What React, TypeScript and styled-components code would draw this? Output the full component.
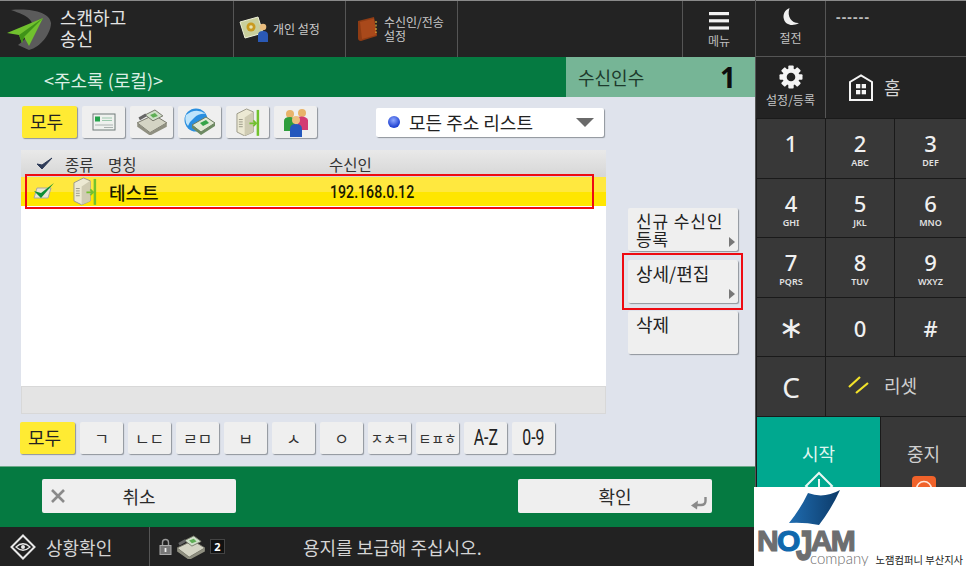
import React from "react";
import styled, { createGlobalStyle } from "styled-components";

const Global = createGlobalStyle`
  html, body { margin: 0; padding: 0; background: #222; }
  * { box-sizing: border-box; }
  body { font-family: "Noto Sans CJK KR", "Noto Sans", sans-serif; }
`;

const Screen = styled.div`
  position: relative; width: 966px; height: 566px; overflow: hidden;
  display: grid; grid-template-columns: 755px 211px; background: #222;
`;
const Left = styled.div`display: flex; flex-direction: column; height: 566px;`;
const Right = styled.div`display: flex; flex-direction: column; height: 566px; background: #1c1c1c; border-left: 1px solid #555;`;

const TopBar = styled.div`
  height: 57px; flex: none; display: flex; background: #232323; border-top: 1px solid #8a8a8a;
`;
const AppCell = styled.div`
  width: 234px; display: flex; align-items: center; padding-left: 5px; gap: 5px; border-right: 1px solid #555;
  color: #e4e4e4; font-size: 18px; line-height: 21px;
`;
const AppName = styled.div`margin-top: -3px;`;
const ShortcutCell = styled.div<{ $pad: number; $gap: number }>`
  width: 112px; display: flex; align-items: center; padding-left: ${p => p.$pad}px; gap: ${p => p.$gap}px; border-right: 1px solid #555;
  color: #c9c9c9; font-size: 12px; line-height: 14px; white-space: nowrap;
`;
const Spacer = styled.div`flex: 1; border-right: 1px solid #555;`;
const MenuCell = styled.div`
  width: 72px; display: flex; flex-direction: column; align-items: center; padding-top: 11px; color: #bdbdbd; font-size: 12px;
`;
const MenuLabel = styled.span`margin-top: 4px; line-height: 14px; white-space: nowrap;`;

const TitleBar = styled.div`height: 40px; flex: none; display: flex; background: #057a41;`;
const Title = styled.div`flex: 1; padding-left: 44px; color: #dcefe4; font-size: 18px; line-height: 47px;`;
const CountPanel = styled.div`
  width: 189px; background: #76b596; display: flex; justify-content: space-between; align-items: center;
  padding: 0 19px 0 12px; color: #1d3a2c; font-size: 18px;
`;
const CountValue = styled.span`
  font-family: "Noto Sans", sans-serif; font-size: 28px; font-weight: 700; color: #0d0d0d; line-height: 40px;
`;

const Content = styled.div`
  flex: 1; background: #dfe3ec; padding: 9px 0 0 21px; position: relative;
  display: grid; grid-template-columns: 585px 1fr; column-gap: 22px; align-content: start;
`;
const ListColumn = styled.div`display: flex; flex-direction: column;`;
const FilterRow = styled.div`display: flex; height: 32px; gap: 5px; align-items: center; padding-left: 1px;`;
const Key = styled.div<{ $active?: boolean; $w?: number }>`
  width: ${p => p.$w ?? 43}px; height: 32px; flex: none; border-radius: 2px;
  display: flex; align-items: center; justify-content: center;
  background: ${p => (p.$active ? "#ffeb33" : "#efefef")};
  box-shadow: 1px 1px 1px #8f949c; color: #1b1b1b;
`;
const ActiveLabel = styled.span`font-size: 18px; color: #222; line-height: 24px; margin: -2px 6px 0 0;`;
const SelectBox = styled.div`
  width: 228px; height: 29px; margin-left: 54px; background: #fff; border-radius: 2px; box-shadow: 1px 1px 1px #8f949c;
  display: flex; align-items: center; padding: 0 10px 0 12px; color: #222; font-size: 18px; gap: 9px;
`;
const Bullet = styled.span`
  width: 12px; height: 12px; border-radius: 50%; flex: none;
  background: radial-gradient(circle at 45% 35%, #8fa8ff, #1c3fd0 70%);
`;
const SelectText = styled.span`flex: 1; white-space: nowrap;`;
const Caret = styled.span`
  width: 0; height: 0; border-left: 9px solid transparent; border-right: 9px solid transparent; border-top: 9px solid #6a6a6a;
`;

const Table = styled.div`margin-top: 12px; width: 585px; height: 264px; display: flex; flex-direction: column; background: #fff;`;
const TableHead = styled.div`
  height: 27px; flex: none; display: flex; align-items: center; background: linear-gradient(#e9e9e9, #d6d6d6);
  color: #333; font-size: 15.5px; padding-left: 15px;
`;
const HeadType = styled.span`margin-left: 12px; width: 43px;`;
const HeadName = styled.span`width: 221px;`;
const Row = styled.div`
  height: 29px; flex: none; display: flex; align-items: center; padding-left: 12px;
  background: linear-gradient(#ffe83f 50%, #ffe600 50%); color: #1b1a00; font-size: 18px;
`;
const RowIcon = styled.span`margin-left: 18px; width: 36px; display: flex;`;
const RowName = styled.span`width: 221px; font-weight: 500;`;
const RowAddress = styled.span`
  display: inline-block; font-family: "Roboto", sans-serif; font-size: 18.5px; font-weight: 500;
  transform: scaleX(.765); transform-origin: left center;
`;
const TableBody = styled.div`flex: 1; background: #fff;`;
const TableFoot = styled.div`height: 28px; flex: none; background: #e4e4e4; border: 1px solid #d8d8d8;`;

const AlphaRow = styled.div`display: flex; gap: 5px; margin-top: 8px; margin-left: -1px; width: 560px;`;
const AlphaKey = styled(Key)<{ $size?: number }>`
  color: #333; font-size: ${p => p.$size ?? 16}px; white-space: nowrap; overflow: hidden; letter-spacing: -.2px;
`;
const AlphaText = styled.span`
  display: inline-block; font-family: "Roboto", sans-serif; font-size: 22px; line-height: 26px; font-weight: 400; color: #222; letter-spacing: 0;
  transform: scaleX(.72);
`;

const SideColumn = styled.div`display: flex; flex-direction: column; gap: 8.5px; padding-top: 102px;`;
const SideButton = styled.div`
  position: relative; width: 110px; height: 43px; background: #efefef; border-radius: 2px; box-shadow: 1px 1px 1px #8f949c;
  color: #222; font-size: 18px; line-height: 17px; padding: 5px 0 0 8px; white-space: nowrap;
`;
const SideLines = styled.span`display: block; font-size: 17px; letter-spacing: .9px; line-height: 18px; margin-top: -1px;`;
const SideArrow = styled.span`
  position: absolute; right: 3px; bottom: 4px; width: 0; height: 0;
  border-top: 5px solid transparent; border-bottom: 5px solid transparent; border-left: 6px solid #777;
`;

const ActionBar = styled.div`
  height: 61px; flex: none; background: #057a41; border-top: 1px solid #6ea98a; display: flex; justify-content: space-between;
  padding: 12px 43px 0 42px;
`;
const ActionButton = styled.div`
  position: relative; width: 194px; height: 34px; background: #efefef; border-radius: 2px; color: #2a2a2a; font-size: 18px;
  display: flex; align-items: center; justify-content: center;
`;
const CancelIcon = styled.span`position: absolute; left: 8px; top: 9px; display: flex;`;
const ReturnIcon = styled.span`position: absolute; right: 4px; bottom: 3px; display: flex;`;

const StatusBar = styled.div`height: 39px; flex: none; background: #222; display: flex; color: #d4d4d4; font-size: 18px;`;
const StatusCell = styled.div`width: 150px; display: flex; align-items: center; gap: 10px; padding-left: 10px; border-right: 1px solid #555; white-space: nowrap;`;
const StatusIcons = styled.div`width: 153px; display: flex; align-items: center; padding-left: 9px; gap: 4px;`;
const CountBadge = styled.span`
  width: 15px; height: 15px; background: #111; border: 1px solid #444; color: #fff; font: 700 11px/13px "Noto Sans", sans-serif; text-align: center;
`;
const StatusText = styled.div`display: flex; align-items: center; white-space: nowrap;`;

const SleepRow = styled.div`height: 57px; flex: none; display: flex; background: #232323; border-top: 1px solid #8a8a8a; border-bottom: 1px solid #555;`;
const IconCell = styled.div`
  width: 70px; flex: none; border-right: 1px solid #555; display: flex; flex-direction: column; align-items: center;
  color: #c5c5c5; font-size: 12px; line-height: 14px; padding-top: 6px;
`;
const SettingsCell = styled(IconCell)`padding-top: 8px;`;
const Dashes = styled.div`padding: 6px 0 0 10px; color: #bcbcbc; font: 700 14px/20px "Noto Sans", sans-serif; letter-spacing: 1.2px;`;
const SettingsRow = styled.div`height: 61px; flex: none; display: flex; background: #232323;`;
const HomeCell = styled.div`flex: 1; display: flex; align-items: center; gap: 11px; padding: 0 0 1px 23px; color: #d4d4d4; font-size: 18px;`;
const Keypad = styled.div`
  display: grid; grid-template-columns: 68px 68px 1fr; grid-auto-rows: 58.5px; gap: 1px; background: #1a1a1a; padding: 1px 0 0 1px; flex: none;
`;
const PadKey = styled.div<{ $low?: boolean }>`
  background: #383838; color: #f0f0f0; display: flex; flex-direction: column; align-items: center;
  padding-top: ${p => (p.$low ? 18 : 12)}px;
  font: 500 22px/24px "Noto Sans", sans-serif;
`;
const StarGlyph = styled.span`font: 400 30px/24px "DejaVu Sans", sans-serif;`;
const ClearKey = styled(PadKey)`font: 400 28px/32px "Noto Sans", sans-serif; padding-top: 14px;`;
const PadSub = styled.span`font: 600 9px/11px "Noto Sans", sans-serif; color: #e2e2e2; margin-top: 2px;`;
const ResetKey = styled.div`
  grid-column: span 2; background: #383838; display: flex; align-items: center; gap: 14px; padding: 0 0 3px 22px; color: #cfcfcf; font-size: 18px;
`;
const BottomKeys = styled.div`flex: 1; display: grid; grid-template-columns: 123px 1fr; gap: 1px; background: #1a1a1a; padding: 1px 0 0 1px;`;
const StartKey = styled.div`
  background: #00a88f; color: #dff5ef; font-size: 18px; line-height: 24px; display: flex; flex-direction: column; align-items: center; padding-top: 24px;
`;
const StopKey = styled.div`
  background: #383838; color: #cfcfcf; font-size: 18px; line-height: 24px; display: flex; flex-direction: column; align-items: center; padding-top: 24px;
`;
const StartMark = styled.span`margin-top: 6px; display: flex;`;
const StopMark = styled.span`margin-top: 11px; display: flex;`;

const Highlight = styled.div<{ $x: number; $y: number; $w: number; $h: number }>`
  position: absolute; left: ${p => p.$x}px; top: ${p => p.$y}px; width: ${p => p.$w}px; height: ${p => p.$h}px;
  border: 2px solid #ee0a12; pointer-events: none;
`;

const LogoBox = styled.div`
  position: absolute; left: 754px; top: 487px; width: 212px; height: 79px; background: #fff;
  padding: 3px 0 0 3px; display: flex; flex-direction: column;
`;
const Sail = styled.svg`margin-left: 31px; flex: none;`;
const Wordmark = styled.div`
  margin-top: 2px; font: 900 30px/24px "Liberation Sans", sans-serif; color: #6d6e70; letter-spacing: -1.8px;
  -webkit-text-stroke: 1.2px #6d6e70; white-space: nowrap;
`;
const BlueLetter = styled.span`color: #0f68ad; -webkit-text-stroke: 1.2px #0f68ad;`;
const TallLetter = styled.span`display: inline-block; margin-left: -2.5px; transform: scaleY(1.42); transform-origin: center top;`;
const LogoFoot = styled.div`display: flex; align-items: baseline; margin: -1px 0 0 53px; white-space: nowrap;`;
const CompanyWord = styled.span`font: 300 15px/13px "Lato", sans-serif; color: #707070;`;
const BranchName = styled.span`margin-left: 7px; font-size: 10.3px; line-height: 13px; color: #222;`;

const Plane = () => (
  <svg width="50" height="44" viewBox="0 0 50 44">
    <path d="M6 3 C28 1 45 6 46 16 C46 26 36 40 24 43 L13 38 C24 30 30 20 26 14 C22 8 14 6 6 3Z" fill="#5b5b5b" />
    <path d="M2 26 L38 11 L24 39 L19 30 L17 36 L14 28Z" fill="#71c12e" />
    <path d="M14 28 L38 11 L19 30 L17 36Z" fill="#3f9318" />
  </svg>
);
const SettingsIcon = () => (
  <svg width="32" height="28" viewBox="0 0 32 28">
    <path d="M1 7 L19 2 L24 18 L6 23Z" fill="#c9cf9c" stroke="#eef0d8" strokeWidth="1" />
    <circle cx="12" cy="12" r="4.5" fill="#c99a1f" /><circle cx="12" cy="12" r="1.8" fill="#e8e2b0" />
    <circle cx="24" cy="12" r="3.3" fill="#e9bd7e" />
    <path d="M19 27 V20 Q19 16 24 16 Q29 16 29 20 V27Z" fill="#2a59b5" />
  </svg>
);
const BookIcon = () => (
  <svg width="24" height="26" viewBox="0 0 24 26">
    <path d="M3 5 L19 1 L22 20 L6 25 Q3 25 3 22Z" fill="#8f3c14" />
    <path d="M5 6 L19 2.5 L21.5 19 L7 23Z" fill="#a9491b" />
    <path d="M21 5 v12" stroke="#d8b33c" strokeWidth="1.2" strokeDasharray="2 1.5" />
  </svg>
);
const Hamburger = () => (
  <svg width="20" height="18" viewBox="0 0 20 18" fill="#f2f2f2">
    <rect width="20" height="3.2" /><rect y="7.2" width="20" height="3.2" /><rect y="14.4" width="20" height="3.2" />
  </svg>
);
const Moon = () => (
  <svg width="18" height="20" viewBox="0 0 18 20">
    <path d="M7.5 1 C2.5 3 0.5 8 2 12.5 C3.5 17.5 10 20 17 16 C10 16.5 4.5 10 7.5 1Z" fill="#f0f0f0" />
  </svg>
);
const Gear = () => (
  <svg width="24" height="24" viewBox="0 0 24 24">
    <g fill="#f4f4f4">
      {[0, 45, 90, 135, 180, 225, 270, 315].map(a => (
        <rect key={a} x="9.3" y="0.5" width="5.4" height="6" rx="1" transform={`rotate(${a} 12 12)`} />
      ))}
      <circle cx="12" cy="12" r="8.5" />
    </g>
    <circle cx="12" cy="12" r="4.3" fill="#232323" />
  </svg>
);
const Home = () => (
  <svg width="24" height="27" viewBox="0 0 24 27">
    <path d="M1 26 V8 L12 1.5 L23 8 V26Z" fill="none" stroke="#f4f4f4" strokeWidth="2" />
    <g fill="#f4f4f4"><rect x="7" y="10" width="4.3" height="4.3" /><rect x="12.7" y="10" width="4.3" height="4.3" /><rect x="7" y="16" width="4.3" height="4.3" /><rect x="12.7" y="16" width="4.3" height="4.3" /></g>
  </svg>
);
const CheckMark = ({ color = "#2d3a57" }: { color?: string }) => (
  <svg width="17" height="14" viewBox="0 0 17 14"><path d="M1 7 L6 12 L16 1 L6 8Z" fill={color} stroke={color} strokeWidth="1" /></svg>
);
const RowCheck = () => (
  <svg width="22" height="20" viewBox="0 0 22 20">
    <path d="M4 6 H18 L15 16 H1Z" fill="#e9e7d5" stroke="#a9a9a0" />
    <path d="M1 9 L8 16 L21 1 L8 11Z" fill="#0d8f35" />
  </svg>
);
const CardIcon = () => (
  <svg width="24" height="18" viewBox="0 0 24 18">
    <rect x="1" y="1" width="22" height="16" fill="#eef1ee" stroke="#6f7a78" />
    <rect x="3" y="3.5" width="5" height="5" fill="#23a34a" />
    <path d="M10 5h10M10 7.5h10" stroke="#9cc9ad" strokeWidth="1.2" />
    <path d="M3 12h18M12 14.5h9" stroke="#aab2b0" strokeWidth="1" />
  </svg>
);
const FaxIcon = ({ w = 32 }: { w?: number }) => (
  <svg width={w} height={w * 0.8} viewBox="0 0 32 26">
    <path d="M1 14 L18 6 L31 14 L14 24Z" fill="#d4d4c4" stroke="#77776a" />
    <path d="M1 14 V18 L14 27 L31 18 V14 L14 24Z" fill="#8f8f80" />
    <path d="M9 6 L19 1 L27 7 L17 12Z" fill="#cfe0c8" stroke="#77776a" />
    <path d="M14 6 L19 4 L22 7 L17 9Z" fill="#5fae55" />
    <path d="M3 10 L10 6" stroke="#666" strokeWidth="3" />
  </svg>
);
const GlobeFaxIcon = () => (
  <svg width="33" height="28" viewBox="0 0 33 28">
    <circle cx="13" cy="12" r="11.5" fill="#2a8fe0" />
    <path d="M3 7 Q13 -1 23 6 Q16 5 11 10 Q7 13 5 18 Q1 13 3 7Z" fill="#bfe4fb" />
    <path d="M9 17 L23 9 L32 15 L18 24Z" fill="#dfe8d4" stroke="#6b7a60" />
    <path d="M9 17 V20 L18 27 L32 18 V15 L18 24Z" fill="#6d8a62" />
    <path d="M17 15 L23 12 L26 15 L20 18Z" fill="#35a448" />
  </svg>
);
const ServerIcon = ({ w = 24 }: { w?: number }) => (
  <svg width={w} height={w * 1.2} viewBox="0 0 25 30">
    <path d="M1 6 L11 1 L18 4 V25 L9 29 L1 25Z" fill="#ece9d3" stroke="#9c9a88" />
    <path d="M9 10 V29 L18 25 V4Z" fill="#cfcbb2" />
    <path d="M3 12h4M3 14.5h4M3 17h4M3 19.5h4" stroke="#9c9a88" strokeWidth="1" />
    <rect x="21.5" y="2" width="2.6" height="27" fill="#72c22e" />
    <path d="M14 16 H21 M18 13 L21 16 L18 19" stroke="#72c22e" strokeWidth="1.8" fill="none" />
  </svg>
);
const GroupIcon = () => (
  <svg width="28" height="30" viewBox="0 0 28 30">
    <circle cx="8" cy="7" r="4" fill="#e8b36a" /><circle cx="20" cy="6" r="4" fill="#e8b36a" />
    <path d="M2 22 V14 Q2 10 8 10 Q12 10 13 14 V24 H2Z" fill="#2f9e3d" />
    <path d="M15 10 Q24 8 26 13 V23 H16Z" fill="#d33a73" />
    <circle cx="14" cy="13" r="4" fill="#edc07e" />
    <path d="M8 30 V22 Q8 17 14 17 Q20 17 20 22 V30Z" fill="#2458bd" />
  </svg>
);
const EyeDiamond = () => (
  <svg width="26" height="26" viewBox="0 0 26 26" fill="none" stroke="#e8e8e8">
    <path d="M13 1.5 L24.5 13 L13 24.5 L1.5 13Z" strokeWidth="2" />
    <path d="M6 13 Q13 6.5 20 13 Q13 19.5 6 13Z" strokeWidth="1.2" />
    <circle cx="13" cy="13" r="2" fill="#e8e8e8" stroke="none" />
  </svg>
);
const Lock = () => (
  <svg width="13" height="17" viewBox="0 0 13 17">
    <path d="M3.5 8 V4.5 Q3.5 1.5 6.5 1.5 Q9.5 1.5 9.5 4.5 V8" fill="none" stroke="#9a9a9a" strokeWidth="1.4" />
    <rect x="1" y="7.5" width="11" height="9" fill="#777" stroke="#aaa" />
    <rect x="5.6" y="10" width="1.8" height="4" fill="#eee" />
  </svg>
);
const CrossIcon = () => (
  <svg width="16" height="16" viewBox="0 0 16 16"><path d="M2 2 L14 14 M14 2 L2 14" stroke="#8a8a8a" strokeWidth="2.6" /></svg>
);
const ReturnArrow = () => (
  <svg width="18" height="14" viewBox="0 0 18 14">
    <path d="M15.5 1 V5 Q15.5 9 11 9 H6" stroke="#8a8a8a" strokeWidth="2.4" fill="none" />
    <path d="M1 9.5 L8 4.5 L7 13.5Z" fill="#8a8a8a" />
  </svg>
);
const ResetSlashes = () => (
  <svg width="22" height="20" viewBox="0 0 22 20"><path d="M1 12 L12 2 M8 18 L20 8" stroke="#f2e22a" strokeWidth="2.2" /></svg>
);
const StartDiamond = () => (
  <svg width="30" height="30" viewBox="0 0 30 30" fill="none" stroke="#eaf8f4" strokeWidth="2"><path d="M15 2 L28 15 L15 28 L2 15Z" /><path d="M15 8 V18" /></svg>
);
const StopIcon = () => (
  <svg width="24" height="24" viewBox="0 0 24 24">
    <rect width="24" height="24" rx="4" fill="#f0622a" />
    <circle cx="12" cy="13" r="7.5" fill="none" stroke="#ffe6d8" strokeWidth="1.6" />
    <path d="M5 13h14" stroke="#ffe6d8" strokeWidth="1.6" />
  </svg>
);

const alpha: [string, number][] = [["ㄱ", 16], ["ㄴㄷ", 16], ["ㄹㅁ", 16], ["ㅂ", 16], ["ㅅ", 16], ["ㅇ", 16], ["ㅈㅊㅋ", 14], ["ㅌㅍㅎ", 14]];
const pad: [string, string][] = [["1", ""], ["2", "ABC"], ["3", "DEF"], ["4", "GHI"], ["5", "JKL"], ["6", "MNO"], ["7", "PQRS"], ["8", "TUV"], ["9", "WXYZ"]];

export default function App() {
  return (
    <Screen>
      <Global />
      <Left>
        <TopBar>
          <AppCell><Plane /><AppName>스캔하고<br />송신</AppName></AppCell>
          <ShortcutCell $pad={5} $gap={2}><SettingsIcon />개인 설정</ShortcutCell>
          <ShortcutCell $pad={9} $gap={5}><BookIcon /><span>수신인/전송<br />설정</span></ShortcutCell>
          <Spacer />
          <MenuCell><Hamburger /><MenuLabel>메뉴</MenuLabel></MenuCell>
        </TopBar>
        <TitleBar>
          <Title>&lt;주소록 (로컬)&gt;</Title>
          <CountPanel>수신인수<CountValue>1</CountValue></CountPanel>
        </TitleBar>
        <Content>
          <ListColumn>
            <FilterRow>
              <Key $active $w={55}><ActiveLabel>모두</ActiveLabel></Key>
              <Key><CardIcon /></Key>
              <Key><FaxIcon /></Key>
              <Key><GlobeFaxIcon /></Key>
              <Key><ServerIcon /></Key>
              <Key><GroupIcon /></Key>
              <SelectBox><Bullet /><SelectText>모든 주소 리스트</SelectText><Caret /></SelectBox>
            </FilterRow>
            <Table>
              <TableHead><CheckMark /><HeadType>종류</HeadType><HeadName>명칭</HeadName>수신인</TableHead>
              <Row><RowCheck /><RowIcon><ServerIcon /></RowIcon><RowName>테스트</RowName><RowAddress>192.168.0.12</RowAddress></Row>
              <TableBody />
              <TableFoot />
            </Table>
            <AlphaRow>
              <Key $active $w={55}><ActiveLabel>모두</ActiveLabel></Key>
              {alpha.map(([a, s]) => <AlphaKey key={a} $size={s}>{a}</AlphaKey>)}
              <AlphaKey><AlphaText>A-Z</AlphaText></AlphaKey>
              <AlphaKey><AlphaText>0-9</AlphaText></AlphaKey>
            </AlphaRow>
          </ListColumn>
          <SideColumn>
            <SideButton><SideLines>신규 수신인<br />등록</SideLines><SideArrow /></SideButton>
            <SideButton>상세/편집<SideArrow /></SideButton>
            <SideButton>삭제</SideButton>
          </SideColumn>
        </Content>
        <ActionBar>
          <ActionButton><CancelIcon><CrossIcon /></CancelIcon>취소</ActionButton>
          <ActionButton>확인<ReturnIcon><ReturnArrow /></ReturnIcon></ActionButton>
        </ActionBar>
        <StatusBar>
          <StatusCell><EyeDiamond />상황확인</StatusCell>
          <StatusIcons><Lock /><FaxIcon w={30} /><CountBadge>2</CountBadge></StatusIcons>
          <StatusText>용지를 보급해 주십시오.</StatusText>
        </StatusBar>
      </Left>
      <Right>
        <SleepRow>
          <IconCell><Moon /><MenuLabel>절전</MenuLabel></IconCell>
          <Dashes>------</Dashes>
        </SleepRow>
        <SettingsRow>
          <SettingsCell><Gear /><MenuLabel>설정/등록</MenuLabel></SettingsCell>
          <HomeCell><Home />홈</HomeCell>
        </SettingsRow>
        <Keypad>
          {pad.map(([d, s]) => <PadKey key={d}>{d}{s && <PadSub>{s}</PadSub>}</PadKey>)}
          <PadKey $low><StarGlyph>∗</StarGlyph></PadKey>
          <PadKey $low>0</PadKey>
          <PadKey $low>#</PadKey>
          <ClearKey>C</ClearKey>
          <ResetKey><ResetSlashes />리셋</ResetKey>
        </Keypad>
        <BottomKeys>
          <StartKey>시작<StartMark><StartDiamond /></StartMark></StartKey>
          <StopKey>중지<StopMark><StopIcon /></StopMark></StopKey>
        </BottomKeys>
      </Right>
      <Highlight $x={25} $y={174} $w={569} $h={35} />
      <Highlight $x={622} $y={253} $w={121} $h={57} />
      <LogoBox>
        <Sail width="54" height="37" viewBox="0 0 54 37">
          <defs>
            <linearGradient id="sailFill" x1="0" y1="0" x2="1" y2="0">
              <stop offset="0" stopColor="#1f6cb0" /><stop offset="1" stopColor="#0c3a68" />
            </linearGradient>
          </defs>
          <path d="M1 33 Q13 18 20 3 Q36 9 52 0 Q44 18 31 35 Q16 32 1 33Z" fill="url(#sailFill)" />
        </Sail>
        <Wordmark>N<BlueLetter>O</BlueLetter><TallLetter>J</TallLetter>AM</Wordmark>
        <LogoFoot><CompanyWord>company</CompanyWord><BranchName>노잼컴퍼니 부산지사</BranchName></LogoFoot>
      </LogoBox>
    </Screen>
  );
}
